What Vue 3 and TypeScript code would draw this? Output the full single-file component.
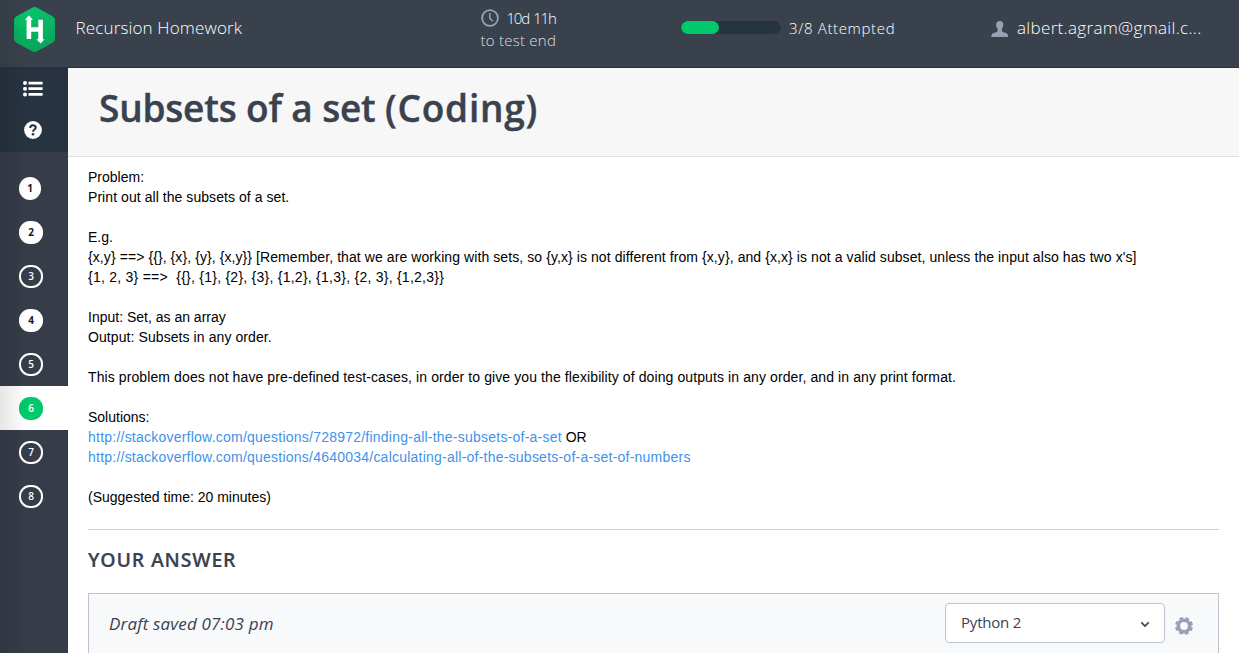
<script setup lang="ts">
interface Question {
  id: number
  state: 'done' | 'open' | 'current'
}

const questions: Question[] = [
  { id: 1, state: 'done' },
  { id: 2, state: 'done' },
  { id: 3, state: 'open' },
  { id: 4, state: 'done' },
  { id: 5, state: 'open' },
  { id: 6, state: 'current' },
  { id: 7, state: 'open' },
  { id: 8, state: 'open' },
]

const attempted = 3
const progress = `${(attempted / questions.length) * 100}%`
</script>

<template>
  <div class="page">
    <header class="topbar">
      <svg class="logo" width="42" height="46" viewBox="0 0 42 46">
        <defs>
          <linearGradient id="hex" x1="0" y1="0" x2="0.4" y2="1">
            <stop offset="0" stop-color="#04cb6d" />
            <stop offset="1" stop-color="#0ba65c" />
          </linearGradient>
        </defs>
        <path d="M18.3 .7Q20.7 -.6 23.1 .7L38.5 9.2Q41 10.7 41 13.5V31.5Q41 34.3 38.5 35.8L23.1 44.3Q20.7 45.6 18.3 44.3L2.5 35.8Q0 34.3 0 31.5V13.5Q0 10.7 2.5 9.2Z" fill="url(#hex)" />
        <path d="M0 17L12 24L29 34L38 36.1L23.1 44.3Q20.7 45.6 18.3 44.3L2.5 35.8Q0 34.3 0 31.5Z" fill="#06a85c" opacity=".35" />
        <path d="M14.9 11V32M26.6 12.8V34M14.9 22.5H26.6" stroke="#fff" stroke-width="4.6" fill="none" />
        <path d="M10.8 12.8L14.9 8.6L19 12.8ZM22.4 32.2H30.6L26.6 36.4Z" fill="#fff" />
      </svg>
      <div class="test-name">Recursion Homework</div>
      <div class="timer">
        <div class="timer-row">
          <svg width="18" height="18" viewBox="0 0 18 18" fill="none" stroke="#98a1b3" stroke-width="1.8">
            <circle cx="9" cy="9" r="7.9" />
            <path d="M8.8 4V9.2L12 12.3" stroke-width="1.5" />
          </svg>
          <span class="time">10d 11h</span>
        </div>
        <div class="timer-note">to test end</div>
      </div>
      <div class="track"><div class="fill" :style="{ width: progress }"></div></div>
      <div class="attempted">{{ attempted }}/{{ questions.length }} Attempted</div>
      <svg class="user" width="18" height="16" viewBox="0 0 18 16" fill="#98a1b3">
        <path d="M8.7 0C11 0 12.3 1.4 12.3 3.6C12.3 5.7 11.6 7 10.8 8V9.6C11 11 12 11.2 13.4 11.6C16 12.3 17 13 17.2 16H.3C.4 13 1.5 12.3 4.1 11.6C5.5 11.2 6.5 11 6.7 9.6V8C5.8 7 5.1 5.7 5.1 3.6C5.1 1.4 6.5 0 8.7 0Z" />
      </svg>
      <div class="email">albert.agram@gmail.c...</div>
    </header>

    <div class="body">
      <nav class="sidebar">
        <div class="tools">
          <svg width="20" height="16" viewBox="0 0 20 16" fill="#fff">
            <circle cx="2" cy="2" r="2" /><circle cx="2" cy="7.7" r="2" /><circle cx="2" cy="13.4" r="2" />
            <path d="M5.5 .7H19.6V3.4H5.5ZM5.5 6.3H19.6V9H5.5ZM5.5 12H19.6V14.7H5.5Z" />
          </svg>
          <svg class="help" width="18" height="18" viewBox="0 0 18 18">
            <circle cx="9" cy="9" r="8.9" fill="#fff" />
            <path d="M6.2 6.9C6.2 3.4 11.8 3.5 11.8 6.6C11.8 8.6 9 8.5 9 10.8" fill="none" stroke="#273340" stroke-width="2" />
            <circle cx="9" cy="13.3" r="1.3" fill="#273340" />
          </svg>
        </div>
        <div class="questions">
          <div v-for="q in questions" :key="q.id" class="question" :class="q.state">
            <span class="bubble" :class="{ first: q.id === 1 }">{{ q.id }}</span>
          </div>
        </div>
      </nav>

      <main class="content">
        <div class="title-bar"><h1>Subsets of a set <span class="kind">(Coding)</span></h1></div>
        <div class="problem">
          <p>Problem:<br /><span class="slight">Print out all the subsets of a set.</span></p>
          <p>E.g.<br /><span class="rule">{x,y} ==&gt; {{ '{\{}, {x}, {y}, {x,y}\}' }} [Remember, that we are working with sets, so {y,x} is not different from {x,y}, and {x,x} is not a valid subset, unless the input also has two x's]</span><br /><span class="sets">{1, 2, 3} ==&gt;&nbsp; {{ '{\{}, {1}, {2}, {3}, {1,2}, {1,3}, {2, 3}, {1,2,3}\}' }}</span></p>
          <p>Input: Set, as an array<br /><span class="rule">Output: Subsets in any order.</span></p>
          <p class="note">This problem does not have pre-defined test-cases, in order to give you the flexibility of doing outputs in any order, and in any print format.</p>
          <p>Solutions:<br /><a>http://stackoverflow.com/questions/728972/finding-all-the-subsets-of-a-set</a> OR<br /><a>http://stackoverflow.com/questions/4640034/calculating-all-of-the-subsets-of-a-set-of-numbers</a></p>
          <p>(Suggested time: 20 minutes)</p>
        </div>
        <section class="answer">
          <h2>YOUR ANSWER</h2>
          <div class="editor">
            <span class="draft">Draft saved 07:03 pm</span>
            <div class="select">
              <span>Python 2</span>
              <svg width="10" height="7" viewBox="0 0 10 7" fill="none" stroke="#39424e" stroke-width="1.6"><path d="M1.3 1.4L5 5.1L8.7 1.4" /></svg>
            </div>
            <svg class="gear" width="18" height="18" viewBox="0 0 18 18">
              <g fill="none" stroke="#98a1b3">
                <circle cx="9" cy="9" r="5.7" stroke-width="3.6" />
                <circle cx="9" cy="9" r="7.8" stroke-width="2.4" stroke-dasharray="3.5 2.626" stroke-dashoffset="-1.3" />
              </g>
            </svg>
          </div>
        </section>
      </main>
    </div>
  </div>
</template>

<style>
body { margin: 0; overflow: hidden; }
</style>

<style scoped>
* { box-sizing: border-box; }
.page { position: relative; width: 1239px; height: 653px; overflow: hidden; background: #fff; font-family: "Open Sans", "Noto Sans", sans-serif; color: #39424e; white-space: nowrap; }
.page::before { content: ""; position: absolute; z-index: 2; left: 0; top: 0; width: 26px; height: 653px; background: linear-gradient(90deg, rgba(0,0,0,.1), rgba(0,0,0,0)); }
.topbar { height: 68px; background: #39424c; border-bottom: 1px solid #263340; display: flex; align-items: flex-start; color: #fff; font-weight: 300; }
.logo { margin: 7px 0 0 14px; flex: none; }
.test-name { margin-left: 19.5px; margin-top: 16px; width: 405px; font-size: 17px; line-height: 24px; letter-spacing: .15px; flex: none; }
.timer { width: 200.5px; margin-top: 7px; font-size: 15px; flex: none; }
.timer-row { display: flex; height: 22px; align-items: center; gap: 8px; }
.time { letter-spacing: -1.2px; word-spacing: 1.6px; font-size: 15px; }
.timer-note { line-height: 22px; color: #dcdfe2; letter-spacing: .25px; }
.track { width: 100px; height: 13px; margin-top: 21px; border-radius: 7px; background: #263340; overflow: hidden; flex: none; }
.fill { height: 13px; border-radius: 7px; background: #00c96b; }
.attempted { margin: 17px 0 0 8px; width: 202px; font-size: 15px; line-height: 23px; letter-spacing: .65px; flex: none; }
.user { margin: 21px 8px 0 0; flex: none; }
.email { margin-top: 16px; font-size: 17px; line-height: 24px; letter-spacing: .33px; }
.body { display: flex; height: 585px; }
.sidebar { width: 68px; flex: none; background: #363c48; }
.tools { height: 84px; background: #273340; padding: 13px 0 0 23px; display: flex; flex-direction: column; }
.help { margin: 24px 0 0 1px; }
.questions { padding-top: 14px; }
.question { height: 44px; padding: 11px 0 0 19px; }
.question.current { background: #fff; }
.bubble { display: block; width: 24px; height: 23px; border-radius: 11px; font: 700 10px/23px "Open Sans", sans-serif; text-align: center; background: #fff; color: #15191e; }
.bubble.first { width: 22px; }
.open .bubble { background: transparent; border: 2px solid #fff; color: #fff; line-height: 19px; font-weight: 600; }
.current .bubble { background: #00c96b; color: #fff; font-weight: 600; }
.content { flex: 1; min-width: 0; }
.title-bar { height: 89px; background: #f7f7f7; border-bottom: 1px solid #dedfe0; padding: 14px 0 0 31px; }
h1 { margin: 0; font-size: 37px; line-height: 52px; font-weight: 600; letter-spacing: -.2px; word-spacing: .2px; -webkit-text-stroke: .4px #39424e; }
.kind { letter-spacing: .75px; }
.problem { height: 373px; margin: 0 20px; padding-top: 10px; border-bottom: 1px solid #ced0d3; font: 14px/20px "Liberation Sans", Arial, sans-serif; color: #000; }
.problem p { margin: 0 0 20px; }
.problem a { color: #4192ea; letter-spacing: .23px; }
.slight { letter-spacing: .06px; }
.rule { letter-spacing: .083px; }
.note { letter-spacing: .1px; }
.sets { letter-spacing: .25px; }
.answer { padding: 0 20px; }
h2 { margin: 16px 0 19px; font-size: 19.5px; line-height: 28px; font-weight: 600; letter-spacing: .8px; -webkit-text-stroke: .2px #39424e; }
.editor { height: 100px; border: 1px solid #bec3cd; background: #f7f9fb; padding: 9px 0 0 20px; display: flex; align-items: flex-start; }
.draft { width: 836px; font-size: 17px; line-height: 42px; font-style: italic; letter-spacing: .17px; flex: none; }
.select { width: 220px; height: 40px; flex: none; border: 1px solid #bec3cd; border-radius: 4px; background: #fff; display: flex; align-items: center; justify-content: space-between; padding: 0 14px 0 15px; font-size: 15px; letter-spacing: -.2px; }
.select span { margin-top: -2px; }
.select svg { margin-top: 2px; }
.gear { margin: 14px 0 0 10px; flex: none; }
</style>
